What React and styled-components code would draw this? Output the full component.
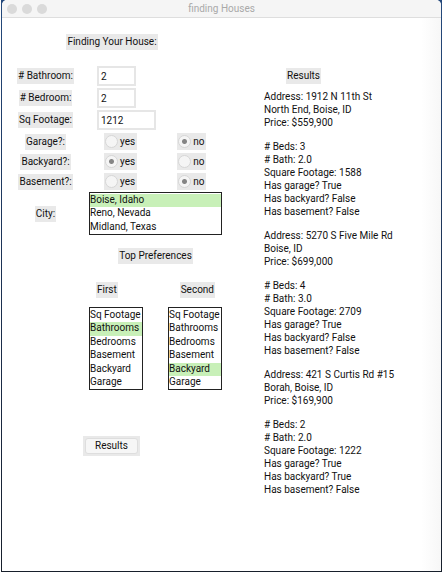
import React from "react";
import styled, { createGlobalStyle } from "styled-components";

const GlobalStyle = createGlobalStyle`
  * { box-sizing: border-box; }
  body { margin: 0; background: #fff; }
  body, input, select, button { font: 10px/12px Roboto, "Liberation Sans", sans-serif; color: #111; }
`;

const Desktop = styled.div`
  min-height: calc(100vh - 2px);
  margin-left: 1px;
  padding: 0 1px 1px;
  display: flex;
  background: linear-gradient(#24497c, #1c3152 50%, #171f2b);
`;

const Window = styled.div`
  flex: 1;
  display: flex;
  flex-direction: column;
  background: #fff;
  border-radius: 5px 5px 0 0;
  overflow: hidden;
`;

const TitleBar = styled.header`
  height: 18px;
  display: grid;
  grid-template-columns: 1fr auto 1fr;
  align-items: center;
  padding: 0 5px;
  background: #f5f5f5;
  border-bottom: 1px solid #dedede;
  color: #a9a9a9;
`;

const Lights = styled.div`
  display: flex;
  gap: 5px;
`;

const Light = styled.span`
  width: 10px;
  height: 10px;
  border-radius: 50%;
  background: #dadada;
`;

const Title = styled.h1`
  margin: 0;
  font: inherit;
`;

const Body = styled.main`
  flex: 1;
  display: flex;
  gap: 42px;
  padding: 16px 8px 16px 0;
  background: linear-gradient(to left, #f7f7f7, #fff 20px);
`;

const Form = styled.form`
  flex: 0 0 220px;
  display: flex;
  flex-direction: column;
`;

const Tag = styled.span`
  padding: 2px 1px;
  background: #e9e9e9;
  white-space: nowrap;
`;

const Heading = styled.h2`
  margin: 0;
  font: inherit;
  display: flex;
  justify-content: center;
`;

const Stack = styled.div`
  display: flex;
  flex-direction: column;
  gap: ${(p) => p.$gap}px;
  margin-top: ${(p) => p.$top}px;
`;

const Row = styled.div`
  display: grid;
  grid-template-columns: 87px 1fr;
  align-items: center;
`;

const Caption = styled.div`
  display: flex;
  justify-content: center;
`;

const TextBox = styled.input`
  width: ${(p) => p.$width}px;
  height: 20px;
  margin-left: 8px;
  padding: 0 2px;
  border: 2px solid #e6e6e6;
  background: #fff;
  outline: none;
`;

const Choices = styled.div`
  display: flex;
  gap: 40px;
  padding-left: 15px;
`;

const Choice = styled.label`
  height: 17px;
  display: flex;
  align-items: center;
  gap: 2px;
  padding: 0 2px 0 1px;
  background: #e9e9e9;
`;

const Radio = styled.input`
  appearance: none;
  width: 13px;
  height: 13px;
  margin: 0;
  border: 1px solid #d6d6d6;
  border-radius: 50%;
  background: #f5f5f5;
  &:checked { background: radial-gradient(circle, #858585 2px, #f5f5f5 3px); }
`;

const ListBox = styled.select`
  width: 100%;
  height: ${(p) => p.$height}px;
  margin: 0;
  padding: 1px 0 0;
  border: 1px solid #222;
  border-radius: 0;
  background: #fff;
  overflow: hidden;
  outline: none;
  option {
    height: 13px;
    min-height: 13px;
    padding: 0;
    line-height: 13px;
    color: #111;
  }
  option:nth-child(even) { height: 14px; }
  option:checked { background: #c8f0b8 linear-gradient(#c8f0b8, #c8f0b8); }
`;

const Preferences = styled.div`
  margin: 18px 0 0 87px;
`;

const PreferenceLabels = styled.div`
  display: flex;
  justify-content: space-between;
  padding: 0 7px;
`;

const PreferenceLists = styled.div`
  display: grid;
  grid-template-columns: 54px 54px;
  justify-content: space-between;
  margin-top: 9px;
`;

const Submit = styled.div`
  align-self: flex-start;
  display: flex;
  margin: 46px 0 0 81px;
  padding: 2px;
  background: #e9e9e9;
`;

const SubmitButton = styled.button`
  width: 53px;
  height: 16px;
  padding: 0;
  border: 1px solid #dedede;
  border-radius: 3px;
  background: #f6f6f6;
`;

const Results = styled.section`
  flex: 1;
  min-width: 140px;
  padding-top: 34px;
`;

const ResultsHeading = styled.h2`
  margin: 0 0 6px 22px;
  font: inherit;
  display: flex;
`;

const Listing = styled.div`
  display: flex;
  flex-direction: column;
  gap: 11px;
  line-height: 13px;
`;

const Lines = styled.p`
  margin: 0;
  white-space: pre-line;
`;

const fields = [
  { id: "bath", label: "# Bathroom:", value: "2", width: 39 },
  { id: "bed", label: "# Bedroom:", value: "2", width: 39 },
  { id: "sqft", label: "Sq Footage:", value: "1212", width: 59 },
];

const questions = [
  { id: "garage", label: "Garage?:", value: "no" },
  { id: "backyard", label: "Backyard?:", value: "yes" },
  { id: "basement", label: "Basement?:", value: "no" },
];

const cities = ["Boise, Idaho", "Reno, Nevada", "Midland, Texas"];
const features = ["Sq Footage", "Bathrooms", "Bedrooms", "Basement", "Backyard", "Garage"];
const preferences = [
  { id: "first", label: "First", value: "Bathrooms" },
  { id: "second", label: "Second", value: "Backyard" },
];

const houses = [
  { address: "1912 N 11th St", area: "North End, Boise, ID", price: "$559,900", beds: 3, bath: "2.0", sqft: 1588, garage: "True", backyard: "False", basement: "False" },
  { address: "5270 S Five Mile Rd", area: "Boise, ID", price: "$699,000", beds: 4, bath: "3.0", sqft: 2709, garage: "True", backyard: "False", basement: "False" },
  { address: "421 S Curtis Rd #15", area: "Borah, Boise, ID", price: "$169,900", beds: 2, bath: "2.0", sqft: 1222, garage: "True", backyard: "True", basement: "False" },
];

function Options({ id, items, value, height }) {
  return (
    <ListBox id={id} size={items.length} defaultValue={value} $height={height}>
      {items.map((item) => <option key={item}>{item}</option>)}
    </ListBox>
  );
}

export default function App() {
  return (
    <Desktop>
      <GlobalStyle />
      <Window>
        <TitleBar>
          <Lights><Light /><Light /><Light /></Lights>
          <Title>finding Houses</Title>
        </TitleBar>
        <Body>
          <Form onSubmit={(e) => e.preventDefault()}>
            <Heading><Tag>Finding Your House:</Tag></Heading>
            <Stack $gap={2} $top={16}>
              {fields.map((f) => (
                <Row key={f.id}>
                  <Caption><Tag as="label" htmlFor={f.id}>{f.label}</Tag></Caption>
                  <TextBox id={f.id} defaultValue={f.value} $width={f.width} />
                </Row>
              ))}
            </Stack>
            <Stack $gap={3} $top={3}>
              {questions.map((q) => (
                <Row key={q.id} role="radiogroup" aria-labelledby={q.id}>
                  <Caption><Tag id={q.id}>{q.label}</Tag></Caption>
                  <Choices>
                    {["yes", "no"].map((v) => (
                      <Choice key={v}>
                        <Radio type="radio" name={q.id} value={v} defaultChecked={q.value === v} />
                        {v}
                      </Choice>
                    ))}
                  </Choices>
                </Row>
              ))}
            </Stack>
            <Stack $gap={13} $top={2}>
              <Row>
                <Caption><Tag as="label" htmlFor="city">City:</Tag></Caption>
                <Options id="city" items={cities} value="Boise, Idaho" height={43} />
              </Row>
              <Row>
                <span />
                <Heading><Tag>Top Preferences</Tag></Heading>
              </Row>
            </Stack>
            <Preferences>
              <PreferenceLabels>
                {preferences.map((p) => (
                  <Tag as="label" key={p.id} htmlFor={p.id}>{p.label}</Tag>
                ))}
              </PreferenceLabels>
              <PreferenceLists>
                {preferences.map((p) => (
                  <Options key={p.id} id={p.id} items={features} value={p.value} height={83} />
                ))}
              </PreferenceLists>
            </Preferences>
            <Submit><SubmitButton type="submit">Results</SubmitButton></Submit>
          </Form>
          <Results>
            <ResultsHeading><Tag>Results</Tag></ResultsHeading>
            <Listing>
              {houses.map((h) => (
                <React.Fragment key={h.address}>
                  <Lines>{`Address: ${h.address}\n${h.area}\nPrice: ${h.price}`}</Lines>
                  <Lines>{`# Beds: ${h.beds}\n# Bath: ${h.bath}\nSquare Footage: ${h.sqft}\nHas garage? ${h.garage}\nHas backyard? ${h.backyard}\nHas basement? ${h.basement}`}</Lines>
                </React.Fragment>
              ))}
            </Listing>
          </Results>
        </Body>
      </Window>
    </Desktop>
  );
}
